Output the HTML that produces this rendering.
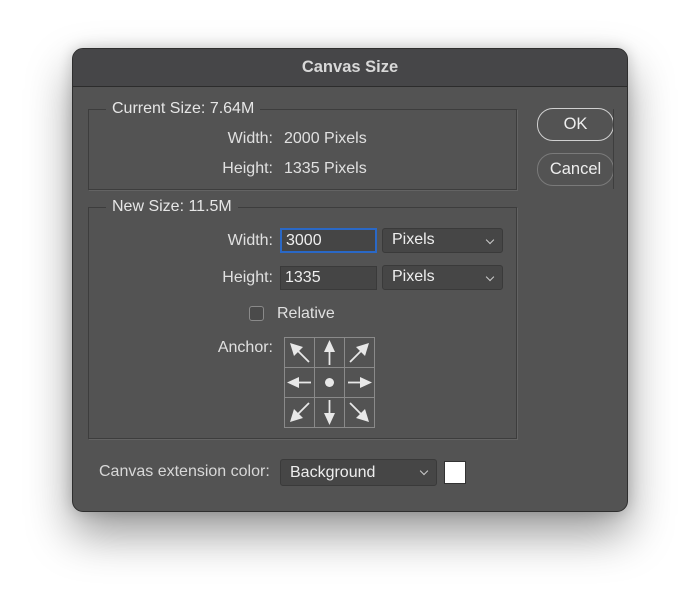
<!DOCTYPE html>
<html><head><style>
body{margin:0;width:700px;height:608px;background:#fff;position:relative;overflow:hidden;font-family:"Liberation Sans",sans-serif;}
.dlg{position:absolute;left:72px;top:48px;width:556px;height:464px;background:#535353;border-radius:11px;border:1px solid #2e2e2e;box-sizing:border-box;box-shadow:0 22px 45px rgba(0,0,0,0.4),0 0 14px rgba(0,0,0,0.18);overflow:hidden}
.tb{position:absolute;left:0;top:0;right:0;height:37px;background:#464648;border-bottom:1px solid #2c2c2c;color:#d8d8d8;font-weight:bold;font-size:16.5px;text-align:center;line-height:37px}
.a{position:absolute;color:#e0e0e0;font-size:16px;white-space:nowrap}
.box{position:absolute;border:1px solid #3d3d3d;box-shadow:1px 1px 0 #636363}
.leg{position:absolute;background:#535353;padding:0 6px;color:#e6e6e6;font-size:16px}
.r{text-align:right}
.inp{position:absolute;background:#454545;border:1px solid #3a3a3a;box-sizing:border-box;color:#eee;font-size:16px;padding-left:4px;line-height:22px}
.sel{position:absolute;background:#464646;border:1px solid #3a3a3a;border-radius:3px;box-sizing:border-box;color:#eee;font-size:16px;padding-left:9px;line-height:22px}
.sel:after{content:"";position:absolute;right:9px;top:8px;width:5px;height:5px;border-right:1.3px solid #ccc;border-bottom:1.3px solid #ccc;transform:rotate(45deg)}
.btn{position:absolute;border:1.5px solid #d0d0d0;border-radius:16px;box-sizing:border-box;color:#eee;font-size:16.5px;text-align:center}
</style></head><body>
<div class="dlg">
<div class="tb">Canvas Size</div>
<div class="box" style="left:15px;top:60px;width:427px;height:79px"></div>
<div class="leg" style="left:33px;top:51px">Current Size: 7.64M</div>
<div class="a r" style="left:80px;width:120px;top:81px">Width:</div>
<div class="a" style="left:211px;top:81px">2000 Pixels</div>
<div class="a r" style="left:80px;width:120px;top:111px">Height:</div>
<div class="a" style="left:211px;top:111px">1335 Pixels</div>

<div class="box" style="left:15px;top:158px;width:427px;height:230px"></div>
<div class="leg" style="left:33px;top:149px">New Size: 11.5M</div>
<div class="a r" style="left:80px;width:120px;top:183px">Width:</div>
<div class="inp" style="left:207px;top:179px;width:97px;height:25px;border:2px solid #2a68c6;line-height:21px">3000</div>
<div class="sel" style="left:309px;top:179px;width:121px;height:25px">Pixels</div>
<div class="a r" style="left:80px;width:120px;top:220px">Height:</div>
<div class="inp" style="left:207px;top:217px;width:97px;height:24px">1335</div>
<div class="sel" style="left:309px;top:216px;width:121px;height:25px">Pixels</div>
<div style="position:absolute;left:176px;top:257px;width:15px;height:15px;border:1px solid #8a8a8a;border-radius:3px;background:#4a4a4a;box-sizing:border-box"></div>
<div class="a" style="left:204px;top:256px">Relative</div>
<div class="a r" style="left:80px;width:120px;top:290px">Anchor:</div>
<svg style="position:absolute;left:211px;top:288px" width="92" height="92" viewBox="0 0 92 92">
<g stroke="#8a8a8a" stroke-width="1" fill="none"><rect x="0.5" y="0.5" width="90" height="90"/><line x1="30.5" y1="0" x2="30.5" y2="91"/><line x1="60.5" y1="0" x2="60.5" y2="91"/><line x1="0" y1="30.5" x2="91" y2="30.5"/><line x1="0" y1="60.5" x2="91" y2="60.5"/></g>
<g stroke="#e8e8e8" stroke-width="1.8" fill="#e8e8e8">
<line x1="25" y1="25" x2="12" y2="12"/><polygon points="6,6 19,10 10,19" stroke="none"/>
<line x1="45.5" y1="28" x2="45.5" y2="11"/><polygon points="45.5,3 40,15 51,15" stroke="none"/>
<line x1="66" y1="25" x2="79" y2="12"/><polygon points="85,6 72,10 81,19" stroke="none"/>
<line x1="27" y1="45.5" x2="11" y2="45.5"/><polygon points="3,45.5 15,40 15,51" stroke="none"/>
<circle cx="45.5" cy="45.5" r="4.5" stroke="none"/>
<line x1="64" y1="45.5" x2="80" y2="45.5"/><polygon points="88,45.5 76,40 76,51" stroke="none"/>
<line x1="25" y1="66" x2="12" y2="79"/><polygon points="6,85 10,72 19,81" stroke="none"/>
<line x1="45.5" y1="63" x2="45.5" y2="80"/><polygon points="45.5,88 40,76 51,76" stroke="none"/>
<line x1="66" y1="66" x2="79" y2="79"/><polygon points="85,85 72,81 81,72" stroke="none"/>
</g></svg>

<div class="btn" style="left:464px;top:59px;width:77px;height:33px;line-height:30px">OK</div>
<div class="btn" style="left:464px;top:104px;width:77px;height:33px;line-height:30px;border-color:#7a7a7a;border-width:1px">Cancel</div>
<div style="position:absolute;left:540px;top:60px;width:1px;height:80px;background:#3e3e3e"></div>

<div class="a" style="left:26px;top:414px;color:#d8d8d8">Canvas extension color:</div>
<div class="sel" style="left:207px;top:410px;width:157px;height:27px;line-height:25px">Background</div>
<div style="position:absolute;left:371px;top:412px;width:20px;height:21px;background:#fff;border:1px solid #333"></div>
</div>
</body></html>
